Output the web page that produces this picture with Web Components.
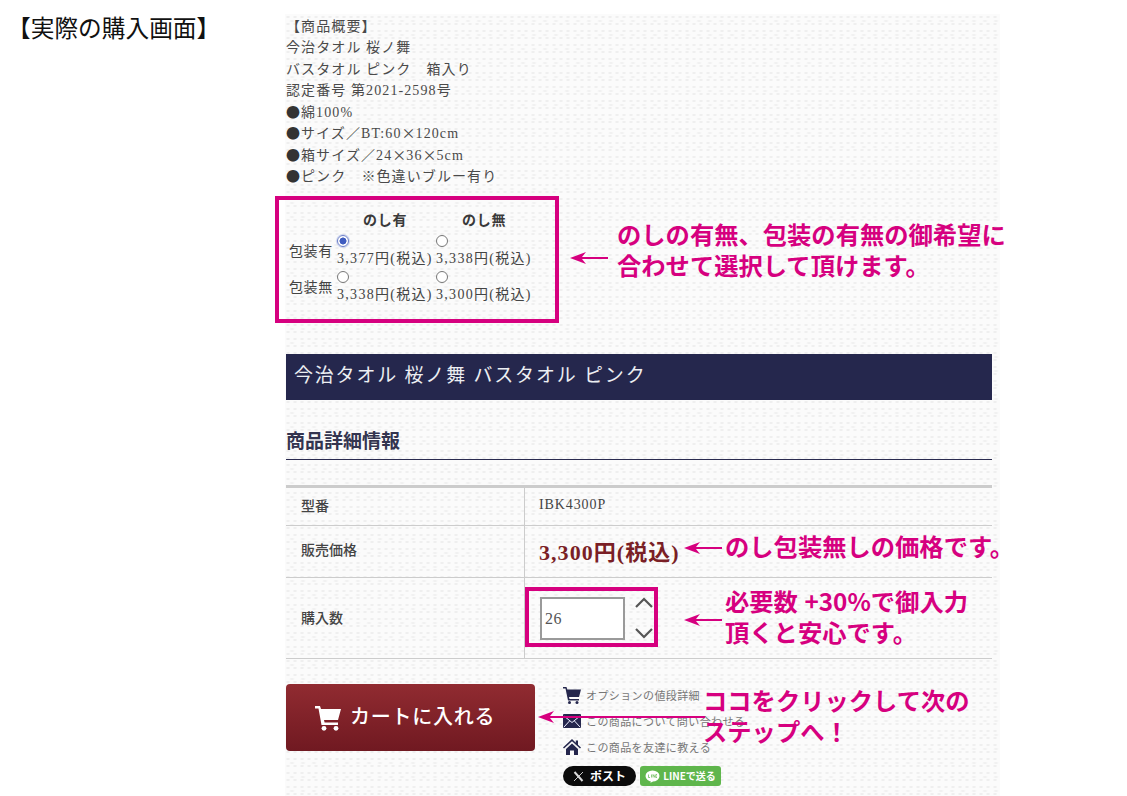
<!DOCTYPE html>
<html lang="ja">
<head>
<meta charset="utf-8">
<title>実際の購入画面</title>
<style>
html, body { margin: 0; background: #fff; }
body { font-family: "Liberation Serif", "Noto Sans CJK JP", serif; }
</style>
</head>
<body>
<buy-page>
  <span slot="label">【実際の購入画面】</span>
  <product-sheet>
    <product-summary></product-summary>
    <option-table></option-table>
    <title-bar>今治タオル 桜ノ舞 バスタオル ピンク</title-bar>
    <section-head>商品詳細情報</section-head>
    <detail-table></detail-table>
    <cart-actions></cart-actions>
  </product-sheet>

  <note-box slot="over" style="left:275px;top:196px;width:284px;height:127px"></note-box>
  <note-box slot="over" style="left:525px;top:587px;width:133px;height:60px"></note-box>

  <call-out slot="over" style="left:570px;top:218px" arrow="38" gap="10" ay="40">のしの有無、包装の有無の御希望に<br>合わせて選択して頂けます。</call-out>
  <call-out slot="over" style="left:684px;top:530px" arrow="38" gap="4" ay="18">のし包装無しの価格です。</call-out>
  <call-out slot="over" style="left:684px;top:585px" arrow="38" gap="4" ay="35">必要数 +30%で御入力<br>頂くと安心です。</call-out>
  <call-out slot="over" style="left:538px;top:684px" arrow="167" gap="-1" ay="33">ココをクリックして次の<br>ステップへ！</call-out>
</buy-page>

<script>
function def(name, css, html) {
  customElements.define(name, class extends HTMLElement {
    constructor() {
      super();
      const root = this.attachShadow({ mode: 'open' });
      root.innerHTML = '<style>' + css + '</style>' + html;
    }
  });
}

// woven paper look of the product sheet
const texture =
  'radial-gradient(ellipse 2.6px 1.3px at 3px 3px, #eeeeee 40%, transparent 100%) 0 0/7px 7px,' +
  'radial-gradient(ellipse 3px 1.4px at 4px 3px, #f1f1f1 40%, transparent 100%) 3px 4px/11px 14px,' +
  '#fbfbfb';

def('buy-page', `
  :host { display: block; position: relative; width: 1127px; height: 796px; overflow: hidden; background: #fff; }
  .wrap { display: grid; grid-template-columns: 285px 715px; height: 100%; }
  .label { font: 23.7px/1 "Noto Sans CJK JP", sans-serif; color: #111; padding: 16px 0 0 7px; white-space: nowrap; }
`, `
  <div class="wrap">
    <div class="label"><slot name="label"></slot></div>
    <slot></slot>
  </div>
  <slot name="over"></slot>
`);

def('product-sheet', `
  :host { display: block; margin-top: 14px; padding: 2px 8px 0 1px; box-sizing: border-box; height: 782px; overflow: hidden;
    background: ${texture}; font-family: "Liberation Serif", "Noto Sans CJK JP", serif; color: #444; }
`, `<slot></slot>`);

def('product-summary', `
  :host { display: block; font-size: 14px; line-height: 21.3px; letter-spacing: 1.1px; color: #4a4a4a; white-space: nowrap; }
  div { height: 21.3px; }
  .j { font-family: "Noto Sans CJK JP", sans-serif; letter-spacing: 0; }
  .b { font-family: "Noto Sans CJK JP", sans-serif; color: #333; letter-spacing: 1px; }
`, `
  <div>【商品概要】</div>
  <div>今治タオル 桜ノ舞</div>
  <div>バスタオル ピンク　箱入り</div>
  <div>認定番号 第2021-2598号</div>
  <div><span class="b">●</span>綿100%</div>
  <div><span class="b">●</span>サイズ／BT:60<span class="j">×</span>120cm</div>
  <div><span class="b">●</span>箱サイズ／24<span class="j">×</span>36<span class="j">×</span>5cm</div>
  <div><span class="b">●</span>ピンク　※色違いブルー有り</div>
`);

def('option-table', `
  :host { display: block; margin: 25px 0 0 3px; height: 130px; font-size: 14px; color: #444; letter-spacing: .3px; white-space: nowrap; }
  .g { display: grid; grid-template-columns: 48px 99px 99px; grid-template-rows: 26px 36px 36px; }
  .h { font-weight: bold; color: #3a3a3a; padding: 1px 0 0 26px; line-height: 18px; letter-spacing: .8px; }
  .r { align-self: center; padding-bottom: 10px; letter-spacing: .6px; }
  .c { display: flex; flex-direction: column; align-items: flex-start; }
  .c span { line-height: 19px; letter-spacing: 1.3px; }
  .dot { width: 12px; height: 12px; box-sizing: border-box; border: 1px solid #777; border-radius: 50%; background: #fff; margin: -2px 0 2px; }
  .on { border-color: #6d80c8; background: radial-gradient(circle, #3f5cc0 0 3.2px, #fff 3.8px); box-shadow: 0 0 0 1px #cfd6ee; }
`, `
  <div class="g">
    <div></div><div class="h">のし有</div><div class="h">のし無</div>
    <div class="r">包装有</div>
    <div class="c"><i class="dot on"></i><span>3,377円(税込)</span></div>
    <div class="c"><i class="dot"></i><span>3,338円(税込)</span></div>
    <div class="r">包装無</div>
    <div class="c"><i class="dot"></i><span>3,338円(税込)</span></div>
    <div class="c"><i class="dot"></i><span>3,300円(税込)</span></div>
  </div>
`);

def('title-bar', `
  :host { display: block; margin-top: 13px; height: 46px; line-height: 44px; padding-left: 8px; background: #25274d; color: #eceef2;
    font-size: 19px; letter-spacing: 1.8px; white-space: nowrap; }
`, `<slot></slot>`);

def('section-head', `
  :host { display: block; margin-top: 27px; height: 33px; box-sizing: border-box; border-bottom: 1px solid #2a2b50;
    font-size: 19px; line-height: 30px; font-weight: bold; color: #33344f; white-space: nowrap; }
`, `<slot></slot>`);

def('detail-table', `
  :host { display: block; margin-top: 25px; border-top: 2px solid #ccc; border-bottom: 1px solid #ccc; font-size: 14px; color: #444; }
  .row { display: grid; grid-template-columns: 239px 1fr; border-top: 1px solid #ccc; }
  .row:first-child { border-top: 0; }
  .k { padding-left: 15px; display: flex; align-items: center; font-weight: 500; color: #444; border-right: 1px solid #ccc; }
  .v { padding-left: 14px; display: flex; align-items: center; gap: 7px; letter-spacing: .9px; }
  .price { font-size: 22px; font-weight: bold; color: #7a1f26; white-space: nowrap; padding-bottom: 3px; letter-spacing: 1.05px; }
  .qty { width: 85px; height: 43px; margin-left: 1px; box-sizing: border-box; background: #fff; border: 2px solid #9a9a9a; padding-left: 3px; line-height: 39px; color: #555; font-size: 16px; letter-spacing: .5px; }
  .step { display: flex; flex-direction: column; gap: 18px; margin-left: 2px; }
  svg { display: block; }
`, `
  <div class="row" style="height:37px"><div class="k" style="padding-bottom:4px">型番</div><div class="v" style="padding-bottom:3px">IBK4300P</div></div>
  <div class="row" style="height:51px"><div class="k" style="padding-bottom:5px">販売価格</div><div class="v"><span class="price">3,300円(税込)</span></div></div>
  <div class="row" style="height:80px"><div class="k" style="padding-bottom:3px">購入数</div><div class="v">
    <div class="qty">26</div>
    <div class="step">
      <svg width="20" height="13" viewBox="0 0 20 13"><path d="M2 11 10 3l8 8" fill="none" stroke="#555" stroke-width="2.2"/></svg>
      <svg width="20" height="13" viewBox="0 0 20 13"><path d="M2 2l8 8 8-8" fill="none" stroke="#555" stroke-width="2.2"/></svg>
    </div>
  </div></div>
`);

def('cart-actions', `
  :host { display: flex; gap: 28px; margin-top: 25px; white-space: nowrap; }
  .btn { width: 249px; height: 67px; border-radius: 4px; background: linear-gradient(#912b31, #701921); display: flex; align-items: center;
    padding-left: 29px; box-sizing: border-box; gap: 8px; color: #fff; font-size: 20px; font-weight: 500; letter-spacing: .75px; }
  .btn span { padding-bottom: 5px; }
  .side { display: flex; flex-direction: column; margin-top: -2px; }
  .lnk { height: 26px; display: flex; align-items: center; gap: 5px; font-size: 11px; color: #777; letter-spacing: .4px; }
  .lnk svg { width: 18px; height: 18px; flex: none; }
  .sns { display: flex; gap: 4px; margin-top: 6px; font-family: "Noto Sans CJK JP", sans-serif; font-weight: bold; font-size: 12px; line-height: 20px; color: #fff; }
  .x { width: 73px; height: 20px; border-radius: 10px; background: #0c0c0c; display: flex; align-items: center; justify-content: center; gap: 6px; }
  .line { width: 81px; height: 20px; border-radius: 3px; background: #5fb64c; display: flex; align-items: center; justify-content: center; gap: 3px; font-size: 10px; }
`, `
  <div class="btn">
    <svg width="27" height="27" viewBox="0 0 27 27" fill="#fff"><path d="M0 2h5l1 3h20l-3 11H9l.6 2.500H23V21H6.500L3.500 4.500H0z"/><circle cx="9" cy="24.300" r="2.400"/><circle cx="21" cy="24.300" r="2.400"/></svg>
    <span>カートに入れる</span>
  </div>
  <div class="side">
    <div class="lnk"><svg viewBox="0 0 18 18" fill="#25274d"><path d="M0 1h3.500l.8 2.500H18l-2 7.500H6l.5 2H16v1.500H5L2.500 2.500H0z"/><circle cx="6.500" cy="16.500" r="1.500"/><circle cx="14" cy="16.500" r="1.500"/></svg><span>オプションの値段詳細</span></div>
    <div class="lnk"><svg viewBox="0 0 18 18"><rect y="2" width="18" height="14" rx="1" fill="#25274d"/><path d="M1 4l8 6.500L17 4M1 15l5.500-6M17 15l-5.500-6" fill="none" stroke="#eef" stroke-width="1"/></svg><span>この商品について問い合わせる</span></div>
    <div class="lnk"><svg viewBox="0 0 18 18" fill="#25274d"><path d="M9 1 0 9.500l1 1L9 3.300l8 7.200 1-1-3-2.800V2.500h-2.200v2.200z"/><path d="M3 11 9 5.500l6 5.500v6h-4v-4.500H7V17H3z"/></svg><span>この商品を友達に教える</span></div>
    <div class="sns">
      <div class="x"><svg width="11" height="11" viewBox="0 0 11 11" fill="none" stroke="#ddd"><path d="M1.500 1l8 9" stroke-width="2"/><path d="M10 1 1 10" stroke-width=".9"/></svg><span>ポスト</span></div>
      <div class="line"><svg width="15" height="13" viewBox="0 0 15 13"><ellipse cx="7.500" cy="6" rx="7" ry="5.500" fill="#fff"/><path d="M6 10.500 5.500 13 9 10.500z" fill="#fff"/><path d="M3.500 4.500v3h1.500M6.500 4.500v3M8 7.500v-3l2 3v-3M12 4.500h-1v3h1" fill="none" stroke="#5fb64c" stroke-width=".7"/></svg><span>LINEで送る</span></div>
    </div>
  </div>
`);

def('note-box', `
  :host { display: block; position: absolute; box-sizing: border-box; border: 4px solid #d6007f; pointer-events: none; }
`, ``);

def('call-out', `
  :host { display: block; position: absolute; white-space: nowrap;
    font: bold 24.3px/31px "Noto Sans CJK JP", sans-serif; color: #d6007f; word-spacing: 1px; }
  svg { display: block; position: absolute; left: 0; }
`, `<svg height="14" viewBox="0 0 38 14"></svg><div class="t"><slot></slot></div>`);

document.querySelectorAll('call-out').forEach(el => {
  const w = +el.getAttribute('arrow'), gap = +el.getAttribute('gap'), ay = +el.getAttribute('ay');
  const svg = el.shadowRoot.querySelector('svg');
  svg.setAttribute('width', w);
  svg.setAttribute('viewBox', '0 0 ' + w + ' 14');
  svg.style.top = (ay - 7) + 'px';
  svg.innerHTML = '<path d="M0 7 16 1 12 6H' + w + 'V8H12L16 13z" fill="#d6007f"/>';
  el.shadowRoot.querySelector('.t').style.marginLeft = (w + gap - 1) + 'px';
});
</script>
</body>
</html>
